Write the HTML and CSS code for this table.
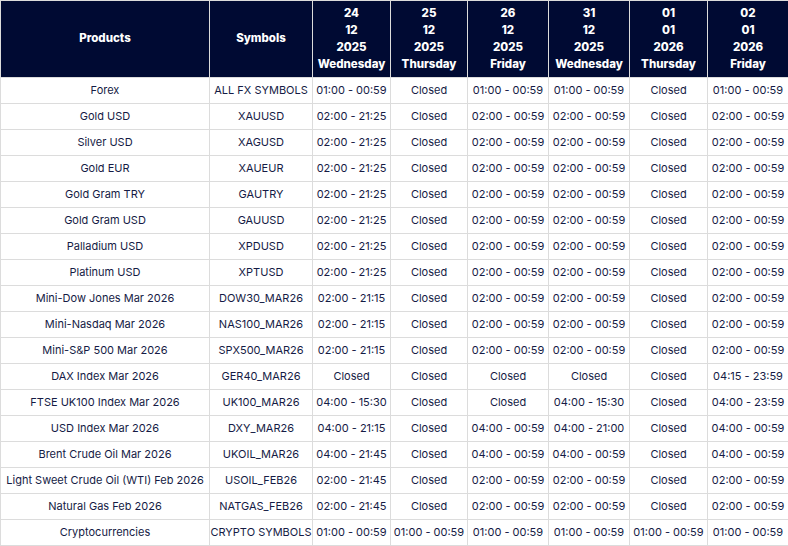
FILE: index.html
```html
<!DOCTYPE html>
<html lang="en">
<head>
<meta charset="utf-8">
<title>Trading Hours</title>
<link rel="stylesheet" href="styles.css">
</head>
<body>
<table class="hours">
  <colgroup>
    <col class="c-prod"><col class="c-sym"><col class="c-d1"><col class="c-d2"><col class="c-d3"><col class="c-d4"><col class="c-d5"><col class="c-d6">
  </colgroup>
  <thead>
    <tr>
      <th>Products</th>
      <th>Symbols</th>
      <th>24<br>12<br>2025<br>Wednesday</th>
      <th>25<br>12<br>2025<br>Thursday</th>
      <th>26<br>12<br>2025<br>Friday</th>
      <th>31<br>12<br>2025<br>Wednesday</th>
      <th>01<br>01<br>2026<br>Thursday</th>
      <th>02<br>01<br>2026<br>Friday</th>
    </tr>
  </thead>
  <tbody>
    <tr><td>Forex</td><td>ALL FX SYMBOLS</td><td>01:00 - 00:59</td><td>Closed</td><td>01:00 - 00:59</td><td>01:00 - 00:59</td><td>Closed</td><td>01:00 - 00:59</td></tr>
    <tr><td>Gold USD</td><td>XAUUSD</td><td>02:00 - 21:25</td><td>Closed</td><td>02:00 - 00:59</td><td>02:00 - 00:59</td><td>Closed</td><td>02:00 - 00:59</td></tr>
    <tr><td>Silver USD</td><td>XAGUSD</td><td>02:00 - 21:25</td><td>Closed</td><td>02:00 - 00:59</td><td>02:00 - 00:59</td><td>Closed</td><td>02:00 - 00:59</td></tr>
    <tr><td>Gold EUR</td><td>XAUEUR</td><td>02:00 - 21:25</td><td>Closed</td><td>02:00 - 00:59</td><td>02:00 - 00:59</td><td>Closed</td><td>02:00 - 00:59</td></tr>
    <tr><td>Gold Gram TRY</td><td>GAUTRY</td><td>02:00 - 21:25</td><td>Closed</td><td>02:00 - 00:59</td><td>02:00 - 00:59</td><td>Closed</td><td>02:00 - 00:59</td></tr>
    <tr><td>Gold Gram USD</td><td>GAUUSD</td><td>02:00 - 21:25</td><td>Closed</td><td>02:00 - 00:59</td><td>02:00 - 00:59</td><td>Closed</td><td>02:00 - 00:59</td></tr>
    <tr><td>Palladium USD</td><td>XPDUSD</td><td>02:00 - 21:25</td><td>Closed</td><td>02:00 - 00:59</td><td>02:00 - 00:59</td><td>Closed</td><td>02:00 - 00:59</td></tr>
    <tr><td>Platinum USD</td><td>XPTUSD</td><td>02:00 - 21:25</td><td>Closed</td><td>02:00 - 00:59</td><td>02:00 - 00:59</td><td>Closed</td><td>02:00 - 00:59</td></tr>
    <tr><td>Mini-Dow Jones Mar 2026</td><td>DOW30_MAR26</td><td>02:00 - 21:15</td><td>Closed</td><td>02:00 - 00:59</td><td>02:00 - 00:59</td><td>Closed</td><td>02:00 - 00:59</td></tr>
    <tr><td>Mini-Nasdaq Mar 2026</td><td>NAS100_MAR26</td><td>02:00 - 21:15</td><td>Closed</td><td>02:00 - 00:59</td><td>02:00 - 00:59</td><td>Closed</td><td>02:00 - 00:59</td></tr>
    <tr><td>Mini-S&amp;P 500 Mar 2026</td><td>SPX500_MAR26</td><td>02:00 - 21:15</td><td>Closed</td><td>02:00 - 00:59</td><td>02:00 - 00:59</td><td>Closed</td><td>02:00 - 00:59</td></tr>
    <tr><td>DAX Index Mar 2026</td><td>GER40_MAR26</td><td>Closed</td><td>Closed</td><td>Closed</td><td>Closed</td><td>Closed</td><td>04:15 - 23:59</td></tr>
    <tr><td>FTSE UK100 Index Mar 2026</td><td>UK100_MAR26</td><td>04:00 - 15:30</td><td>Closed</td><td>Closed</td><td>04:00 - 15:30</td><td>Closed</td><td>04:00 - 23:59</td></tr>
    <tr><td>USD Index Mar 2026</td><td>DXY_MAR26</td><td>04:00 - 21:15</td><td>Closed</td><td>04:00 - 00:59</td><td>04:00 - 21:00</td><td>Closed</td><td>04:00 - 00:59</td></tr>
    <tr><td>Brent Crude Oil Mar 2026</td><td>UKOIL_MAR26</td><td>04:00 - 21:45</td><td>Closed</td><td>04:00 - 00:59</td><td>04:00 - 00:59</td><td>Closed</td><td>04:00 - 00:59</td></tr>
    <tr><td>Light Sweet Crude Oil (WTI) Feb 2026</td><td>USOIL_FEB26</td><td>02:00 - 21:45</td><td>Closed</td><td>02:00 - 00:59</td><td>02:00 - 00:59</td><td>Closed</td><td>02:00 - 00:59</td></tr>
    <tr><td>Natural Gas Feb 2026</td><td>NATGAS_FEB26</td><td>02:00 - 21:45</td><td>Closed</td><td>02:00 - 00:59</td><td>02:00 - 00:59</td><td>Closed</td><td>02:00 - 00:59</td></tr>
    <tr><td>Cryptocurrencies</td><td>CRYPTO SYMBOLS</td><td>01:00 - 00:59</td><td>01:00 - 00:59</td><td>01:00 - 00:59</td><td>01:00 - 00:59</td><td>01:00 - 00:59</td><td>01:00 - 00:59</td></tr>
  </tbody>
</table>
</body>
</html>
```

FILE: styles.css
```css
html, body {
  margin: 0;
  padding: 0;
  background: #ffffff;
}

.hours {
  border-collapse: collapse;
  table-layout: fixed;
  width: 788px;
  font-family: Inter, "Open Sans", sans-serif;
  font-size: 11px;
  color: #151b45;
}

.c-prod { width: 209px; }
.c-sym { width: 103px; }
.c-d1 { width: 78px; }
.c-d2 { width: 77px; }
.c-d3 { width: 81px; }
.c-d4 { width: 81px; }
.c-d5 { width: 78px; }
.c-d6 { width: 81px; }

.hours th,
.hours td {
  border: 1px solid #dcdcdc;
  text-align: center;
  vertical-align: middle;
  padding: 0 0 1px 0;
  white-space: nowrap;
}

.hours th {
  background: #000a33;
  color: #ffffff;
  font-weight: 800;
  font-size: 11.5px;
  line-height: 17px;
  height: 75px;
}

.hours td {
  height: 24px;
  line-height: 14px;
}
```
